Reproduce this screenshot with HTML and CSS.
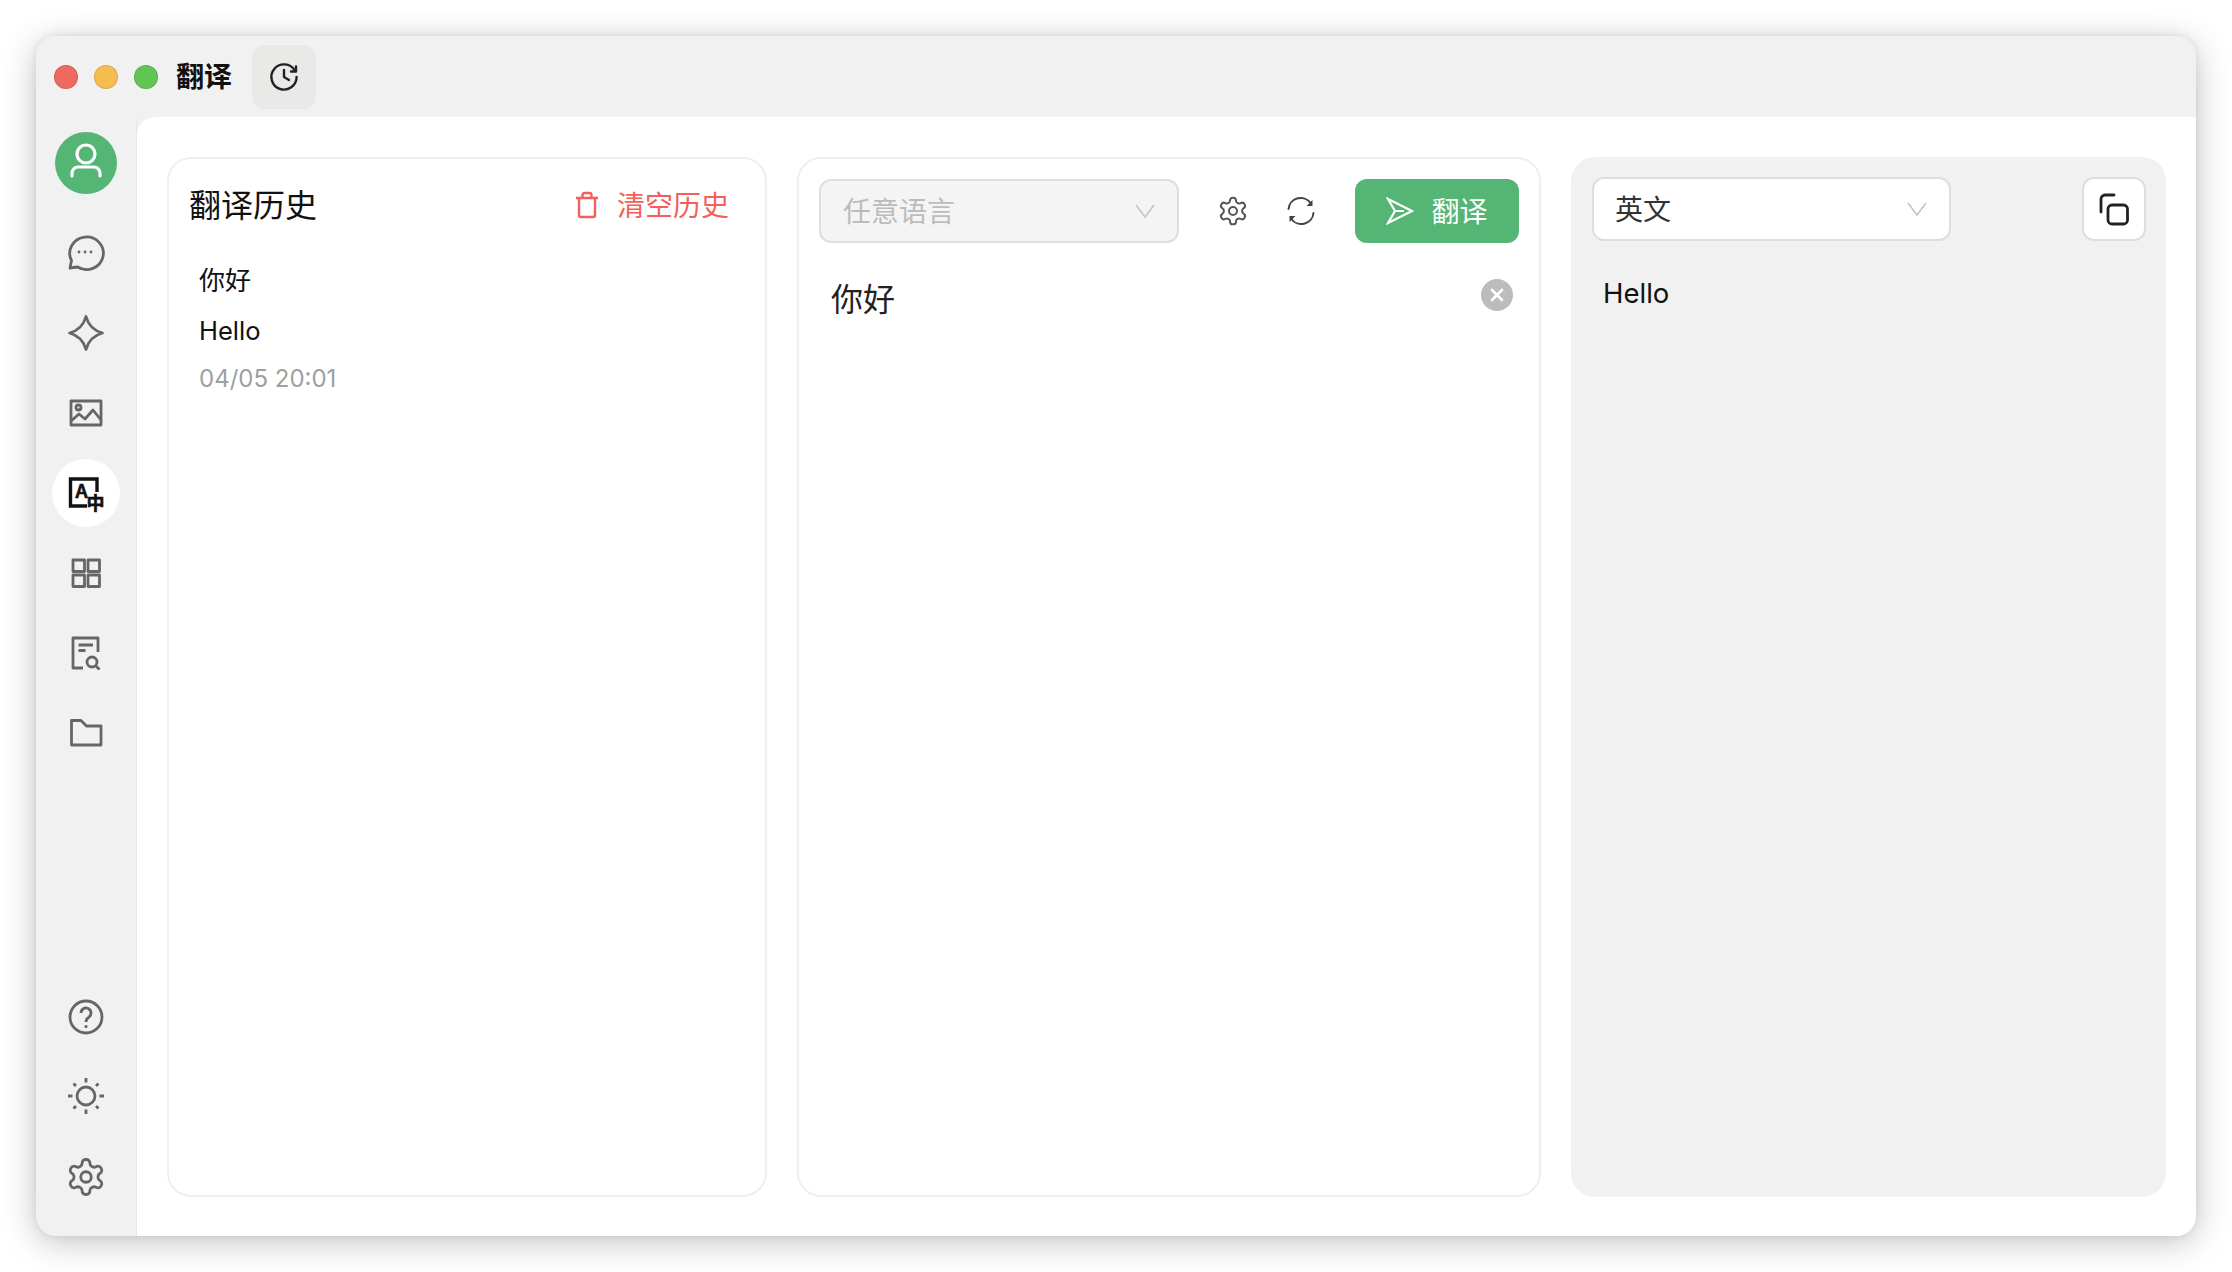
FILE: index.html

```html
<!DOCTYPE html>
<html lang="zh-CN">
<head>
  <meta charset="UTF-8">
  <title>翻译</title>
  <link rel="stylesheet" href="styles.css">
</head>
<body>
  <svg class="sprite" width="0" height="0">
    <symbol id="gear" viewBox="0 0 24 24">
      <path d="M12.22 2h-.44a2 2 0 0 0-2 2v.18a2 2 0 0 1-1 1.73l-.43.25a2 2 0 0 1-2 0l-.15-.08a2 2 0 0 0-2.73.73l-.22.38a2 2 0 0 0 .73 2.73l.15.1a2 2 0 0 1 1 1.72v.51a2 2 0 0 1-1 1.74l-.15.09a2 2 0 0 0-.73 2.73l.22.38a2 2 0 0 0 2.73.73l.15-.08a2 2 0 0 1 2 0l.43.25a2 2 0 0 1 1 1.73V20a2 2 0 0 0 2 2h.44a2 2 0 0 0 2-2v-.18a2 2 0 0 1 1-1.73l.43-.25a2 2 0 0 1 2 0l.15.08a2 2 0 0 0 2.73-.73l.22-.39a2 2 0 0 0-.73-2.73l-.15-.08a2 2 0 0 1-1-1.74v-.5a2 2 0 0 1 1-1.74l.15-.09a2 2 0 0 0 .73-2.73l-.22-.38a2 2 0 0 0-2.73-.73l-.15.08a2 2 0 0 1-2 0l-.43-.25a2 2 0 0 1-1-1.73V4a2 2 0 0 0-2-2z"/>
      <circle cx="12" cy="12" r="3"/>
    </symbol>
    <symbol id="chevron" viewBox="0 0 20 14">
      <path d="M1 1l9 12 9-12"/>
    </symbol>
  </svg>

  <div class="window">
    <header class="titlebar">
      <span class="light red"></span>
      <span class="light yellow"></span>
      <span class="light green"></span>
      <span class="app-title">翻译</span>
      <button class="history-btn">
        <svg class="line" width="32" height="32" viewBox="0 0 32 32">
          <path d="M26.8 9.5A12.6 12.6 0 1 0 28.6 16"/>
          <path d="M28 5.5v5h-5"/>
          <path d="M16 9v7l5 3"/>
        </svg>
      </button>
    </header>

    <div class="main">
      <nav class="sidebar">
        <div class="avatar">
          <svg width="40" height="40" viewBox="0 0 40 40">
            <circle cx="20" cy="11" r="9"/>
            <path d="M6 33v-3a6 6 0 0 1 6-6h16a6 6 0 0 1 6 6v3"/>
          </svg>
        </div>
        <div class="nav-group">
          <a class="nav-item">
            <svg class="nudge" width="40" height="40" viewBox="0 0 40 40">
              <path d="M5 36l1.5-7.5A16.8 16.3 0 1 1 12.5 35z"/>
              <circle class="dot" cx="14" cy="20" r="1.4"/>
              <circle class="dot" cx="20" cy="20" r="1.4"/>
              <circle class="dot" cx="26" cy="20" r="1.4"/>
            </svg>
          </a>
          <a class="nav-item">
            <svg width="40" height="40" viewBox="0 0 40 40">
              <path d="M20 3.5Q23.5 16.5 36.5 20Q23.5 23.5 20 36.5Q16.5 23.5 3.5 20Q16.5 16.5 20 3.5z"/>
            </svg>
          </a>
          <a class="nav-item">
            <svg width="40" height="40" viewBox="0 0 40 40">
              <rect x="5" y="8" width="30" height="24"/>
              <circle cx="12.5" cy="14.5" r="2.5"/>
              <path d="M5 28l8-7 6 5 8-9 8 10"/>
            </svg>
          </a>
          <a class="nav-item active">
            <svg width="40" height="40" viewBox="0 0 40 40">
              <path d="M31 19V6H4.5v27H21"/>
              <text class="icon-a" x="9" y="25">A</text>
              <text class="icon-zh" x="20.5" y="36.5">中</text>
            </svg>
          </a>
          <a class="nav-item">
            <svg width="40" height="40" viewBox="0 0 40 40">
              <rect x="7" y="7" width="11.5" height="11.5"/>
              <rect x="22" y="7" width="11.5" height="11.5"/>
              <rect x="7" y="22" width="11.5" height="11.5"/>
              <rect x="22" y="22" width="11.5" height="11.5"/>
            </svg>
          </a>
          <a class="nav-item">
            <svg width="40" height="40" viewBox="0 0 40 40">
              <path d="M17 35H7V5h25v14"/>
              <path d="M12.5 12H27M12.5 17.5h7"/>
              <circle cx="26" cy="29" r="5"/>
              <path d="M29.5 32.5l4 4"/>
            </svg>
          </a>
          <a class="nav-item">
            <svg width="40" height="40" viewBox="0 0 40 40">
              <path d="M5.5 7.5H15l5.5 5.5h14.5v19H5.5z"/>
            </svg>
          </a>
        </div>
        <div class="nav-group">
          <a class="nav-item">
            <svg width="40" height="40" viewBox="0 0 40 40">
              <circle cx="20" cy="20" r="16"/>
              <path d="M15 16a5 5 0 1 1 8 4c-2 1.5-3 2.5-3 5"/>
              <circle class="dot" cx="20" cy="29.5" r="1.6"/>
            </svg>
          </a>
          <a class="nav-item">
            <svg class="nudge-up" width="40" height="40" viewBox="0 0 40 40">
              <circle cx="20" cy="20" r="9"/>
              <path d="M20 2v4.5M20 33.5V38M2 20h4.5M33.5 20H38M7.500 7.500l2.500 2.500M30 30l2.500 2.500M7.500 32.500l2.500-2.500M30 10l2.500-2.500"/>
            </svg>
          </a>
          <a class="nav-item">
            <svg class="gear-lg" width="42" height="42"><use href="#gear"/></svg>
          </a>
        </div>
      </nav>

      <main class="content">
        <section class="panel history">
          <div class="history-head">
            <h2>翻译历史</h2>
            <button class="clear-btn">
              <svg width="26" height="28" viewBox="0 0 26 28">
                <path d="M2 7h22M5 7v17a2 2 0 0 0 2 2h12a2 2 0 0 0 2-2V7M8.5 7V4a2 2 0 0 1 2-2h5a2 2 0 0 1 2 2v3"/>
              </svg>
              <span>清空历史</span>
            </button>
          </div>
          <div class="history-item">
            <p class="src">你好</p>
            <p class="dst">Hello</p>
            <p class="time">04/05 20:01</p>
          </div>
        </section>

        <section class="panel source">
          <div class="toolbar">
            <div class="select disabled">
              <span>任意语言</span>
              <svg class="chevron" width="20" height="14"><use href="#chevron"/></svg>
            </div>
            <button class="icon-btn first">
              <svg class="gear-sm" width="32" height="32"><use href="#gear"/></svg>
            </button>
            <button class="icon-btn">
              <svg class="line thin" width="32" height="32" viewBox="0 0 32 32">
                <path d="M3.500 14A12.300 12.300 0 0 1 26 8.500"/>
                <path d="M28.500 18a12.300 12.300 0 0 1-22.500 5.500"/>
                <path class="fill" d="M27.500 5v6h-6zM4.500 27v-6h6z"/>
              </svg>
            </button>
            <button class="translate-btn">
              <svg width="28" height="28" viewBox="0 0 28 28">
                <path d="M2 2l24 12-24 12 7-12z"/>
                <path d="M9 14h9"/>
              </svg>
              <span>翻译</span>
            </button>
          </div>
          <div class="source-text">
            <span>你好</span>
            <button class="clear-input">
              <svg width="14" height="14" viewBox="0 0 14 14"><path d="M2 2l10 10M12 2L2 12"/></svg>
            </button>
          </div>
        </section>

        <section class="panel result">
          <div class="toolbar between">
            <div class="select">
              <span>英文</span>
              <svg class="chevron" width="20" height="14"><use href="#chevron"/></svg>
            </div>
            <button class="copy-btn">
              <svg class="line heavy" width="36" height="36" viewBox="0 0 36 36">
                <path d="M5 21V8a4 4 0 0 1 4-4h9"/>
                <rect x="12" y="14" width="19.500" height="19" rx="4"/>
              </svg>
            </button>
          </div>
          <p class="result-text">Hello</p>
        </section>
      </main>
    </div>
  </div>
</body>
</html>
```

FILE: styles.css

```css
* {
  box-sizing: border-box;
}
body {
  margin: 0;
  padding: 36px;
  height: 1272px;
  overflow: hidden;
  background: #fff;
  color: #111;
  font-family: Inter, "Noto Sans CJK SC", sans-serif;
}
p, h2 {
  margin: 0;
  font-weight: 400;
}
button {
  font-family: inherit;
  cursor: pointer;
  padding: 0;
  border: none;
  background: none;
}
.sprite {
  position: absolute;
}
svg {
  display: block;
  fill: none;
}

.window {
  height: 1200px;
  display: flex;
  flex-direction: column;
  background: #f1f1f1;
  border-radius: 20px;
  overflow: hidden;
  box-shadow: 0 6px 34px rgba(0,0,0,0.24), 0 0 8px rgba(0,0,0,0.08);
}

.titlebar {
  height: 81px;
  flex: none;
  display: flex;
  align-items: center;
  padding-left: 18px;
}
.light {
  width: 24px;
  height: 24px;
  border-radius: 50%;
  margin-right: 16px;
  border: 1px solid rgba(0,0,0,0.1);
}
.red { background: #ee6a5f; }
.yellow { background: #f5bd4f; }
.green { background: #61c554; }
.app-title {
  margin-left: 2px;
  padding-bottom: 4px;
  font-size: 28px;
  font-weight: 700;
}
.history-btn {
  width: 64px;
  height: 64px;
  margin-left: 20px;
  border-radius: 12px;
  background: #e9e9e7;
  display: flex;
  align-items: center;
  justify-content: center;
}
.line {
  stroke: #222;
  stroke-width: 2.4;
  stroke-linecap: round;
  stroke-linejoin: round;
}
.line.thin {
  stroke: #444;
  stroke-width: 2;
}
.line.heavy {
  stroke-width: 2.8;
}
.fill {
  fill: #444;
  stroke: none;
}

.main {
  flex: 1;
  display: flex;
  min-height: 0;
}
.sidebar {
  width: 101px;
  flex: none;
  display: flex;
  flex-direction: column;
  align-items: center;
  padding: 15px 0 19px;
  border-right: 1px solid #e8e8e8;
}
.avatar {
  width: 62px;
  height: 62px;
  flex: none;
  border-radius: 50%;
  background: #54b575;
  display: flex;
  align-items: center;
  justify-content: center;
}
.avatar svg {
  stroke: #fff;
  stroke-width: 3.2;
  stroke-linecap: round;
}
.nav-group {
  display: flex;
  flex-direction: column;
  align-items: center;
}
.nav-group:last-child {
  margin-top: auto;
}
.avatar + .nav-group {
  margin-top: 19px;
}
.nav-item {
  width: 68px;
  height: 68px;
  margin: 6px 0;
  border-radius: 50%;
  display: flex;
  align-items: center;
  justify-content: center;
}
.nav-item svg {
  stroke: #666;
  stroke-width: 2.8;
  stroke-linejoin: round;
}
.nav-item .nudge {
  margin: -1px 2px 1px 0;
}
.nav-item .nudge-up {
  margin-bottom: 2px;
}
.nav-item .dot {
  fill: #666;
  stroke: none;
}
.nav-item .gear-lg {
  stroke-width: 1.6;
}
.nav-item.active {
  background: #fff;
}
.nav-item.active svg {
  stroke: #111;
  stroke-width: 3.4;
  stroke-linejoin: miter;
}
.nav-item.active .icon-a,
.nav-item.active .icon-zh {
  fill: #111;
  stroke: #111;
  stroke-width: 0.6;
}
.icon-a {
  font-size: 18px;
  font-weight: 600;
}
.icon-zh {
  font-size: 18px;
  font-weight: 700;
}

.content {
  flex: 1;
  min-width: 0;
  display: flex;
  gap: 30px;
  padding: 40px 30px 39px;
  background: #fff;
  border-top-left-radius: 18px;
}
.panel {
  border-radius: 24px;
  border: 2px solid #efefef;
}

.history {
  width: 600px;
  flex: none;
  padding: 0 36px 0 20px;
}
.history-head {
  height: 92px;
  display: flex;
  align-items: center;
  justify-content: space-between;
}
.history-head h2 {
  padding-bottom: 4px;
  font-size: 32px;
}
.clear-btn {
  display: flex;
  align-items: center;
  gap: 17px;
  font-size: 28px;
  color: #f25f5c;
}
.clear-btn span {
  padding-bottom: 2px;
}
.clear-btn svg {
  stroke: #f25f5c;
  stroke-width: 2.4;
  stroke-linejoin: round;
}
.history-item {
  padding: 12px 10px;
}
.src {
  font-size: 26px;
  line-height: 36px;
}
.dst {
  font-size: 25.5px;
  line-height: 36px;
  margin-top: 14px;
}
.time {
  font-size: 24px;
  line-height: 34px;
  margin-top: 13px;
  color: #a0a0a0;
}

.source {
  width: 744px;
  flex: none;
  padding: 20px;
}
.toolbar {
  display: flex;
  align-items: center;
}
.between {
  justify-content: space-between;
}
.select {
  width: 360px;
  height: 64px;
  flex: none;
  display: flex;
  align-items: center;
  justify-content: space-between;
  padding: 0 22px;
  border: 2px solid #dedede;
  border-radius: 12px;
  background: #fff;
  font-size: 28px;
  color: #333;
}
.select span {
  padding-bottom: 3px;
}
.select.disabled {
  background: #f4f4f4;
  color: #bcbcbc;
}
.chevron {
  stroke: #c4c4c4;
  stroke-width: 1.6;
}
.icon-btn {
  width: 40px;
  height: 40px;
  margin-left: 28px;
  display: flex;
  align-items: center;
  justify-content: center;
}
.icon-btn.first {
  margin-left: 34px;
}
.gear-sm {
  stroke: #555;
  stroke-width: 1.5;
}
.translate-btn {
  width: 164px;
  height: 64px;
  margin-left: 34px;
  display: flex;
  align-items: center;
  justify-content: center;
  gap: 17px;
  border-radius: 12px;
  background: #54b575;
  color: #fff;
  font-size: 28px;
}
.translate-btn span {
  padding-bottom: 2px;
}
.translate-btn svg {
  stroke: #fff;
  stroke-width: 2.2;
  stroke-linejoin: miter;
}
.source-text {
  display: flex;
  align-items: center;
  justify-content: space-between;
  height: 40px;
  margin-top: 34px;
  padding: 0 6px 0 12px;
  font-size: 32px;
  color: #222;
}
.clear-input {
  width: 32px;
  height: 32px;
  margin-top: -4px;
  border-radius: 50%;
  background: #bcbcbc;
  display: flex;
  align-items: center;
  justify-content: center;
}
.clear-input svg {
  stroke: #fff;
  stroke-width: 2.6;
  stroke-linecap: round;
}

.result {
  flex: 1;
  min-width: 0;
  border: none;
  background: #f1f1f1;
  padding: 20px 20px 20px 21px;
}
.result .select {
  width: 359px;
  padding-left: 21px;
}
.copy-btn {
  width: 64px;
  height: 64px;
  border: 2px solid #dedede;
  border-radius: 12px;
  background: #fff;
  display: flex;
  align-items: center;
  justify-content: center;
}
.result-text {
  margin-top: 32px;
  padding-left: 11px;
  font-size: 27.5px;
  line-height: 40px;
}
```
